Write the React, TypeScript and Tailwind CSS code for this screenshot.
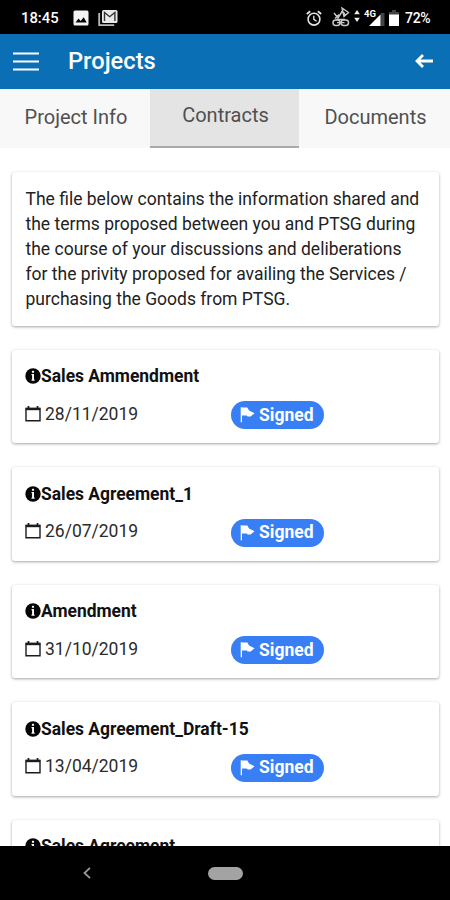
import { clsx } from "clsx";

const tabs = [
  { label: "Project Info", active: false },
  { label: "Contracts", active: true },
  { label: "Documents", active: false },
];

type Contract = { title: string; date?: string };

const contracts: Contract[] = [
  { title: "Sales Ammendment", date: "28/11/2019" },
  { title: "Sales Agreement_1", date: "26/07/2019" },
  { title: "Amendment", date: "31/10/2019" },
  { title: "Sales Agreement_Draft-15", date: "13/04/2019" },
  { title: "Sales Agreement" },
];

const intro = [
  "The file below contains the information shared and",
  "the terms proposed between you and PTSG during",
  "the course of your discussions and deliberations",
  "for the privity proposed for availing the Services /",
  "purchasing the Goods from PTSG.",
];

function InfoIcon() {
  return (
    <svg viewBox="0 0 16 16" className="-mt-px h-4 w-4 shrink-0">
      <circle cx="8" cy="8" r="7.7" fill="#050505" />
      <rect x="6.9" y="2.8" width="2.2" height="2" rx="0.6" fill="#fff" />
      <path d="M6.5 6h2.500v5.500h.6v1.200H6.500v-1.200h.6V7.200h-.6z" fill="#fff" />
    </svg>
  );
}

function CalendarIcon() {
  return (
    <svg viewBox="0 0 16 16" className="h-4 w-4 shrink-0" fill="none" stroke="#1c1c1c">
      <path d="M1 2.500h14v12.300H1z" strokeWidth="1.400" />
      <path d="M.8 3h14.400" strokeWidth="2.400" />
      <path d="M3.500 0v3M12.500 0v3" strokeWidth="1.700" />
    </svg>
  );
}

function FlagIcon() {
  return (
    <svg viewBox="0 0 15 16" className="-mt-px h-4 w-[15px] shrink-0" fill="#fff">
      <path d="M.7 .3h1.300v15H.7z" />
      <path d="M2 .6h5.400l1.600 2.800 5.600 2.800-4 3.300H7.600L6.800 8.600H2z" />
    </svg>
  );
}

function StatusBar() {
  return (
    <div className="flex h-[34px] shrink-0 items-center bg-black pl-[21px] pr-[19px] pt-0.5 text-white">
      <span className="w-[37px] text-[14.800px] font-medium">18:45</span>
      <svg viewBox="0 0 16 16" className="ml-[15px] h-4 w-4">
        <rect x=".5" y=".5" width="15" height="15" rx="1.5" fill="#f4f4f4" />
        <path d="M2.500 12.500l3-4 2.200 2.500 3-3.800 3 5.300z" fill="#050505" />
      </svg>
      <svg viewBox="0 0 20 18" className="ml-[9px] h-[18px] w-5" fill="none">
        <path d="M1.200 4v12.200h15" stroke="#bbb" strokeWidth="1.8" />
        <rect x="4" y="1" width="15.500" height="13" rx="1.5" fill="#e9e9e9" />
        <path d="M6.500 12V3.500l5.200 4.200 5.200-4.200V12" stroke="#333" strokeWidth="1.400" />
      </svg>

      <div className="ml-auto flex items-center">
        <svg viewBox="0 0 16 17" className="h-[17px] w-4" fill="none" stroke="#e4e4e4">
          <circle cx="8" cy="9.2" r="5.9" strokeWidth="1.6" />
          <path d="M.8 4l3.400-2.800M15.200 4l-3.400-2.800" strokeWidth="1.8" />
          <path d="M7.800 5.800v3.600l2.800 1.800" strokeWidth="1.3" />
        </svg>
        <svg viewBox="0 0 18 20" className="-mt-0.5 ml-[10px] h-5 w-[18px]" fill="none" stroke="#c9c9c9">
          <path d="M2 6l4 5 3.500-5.500M3 11.500l4-4M10 1l6.500 4.500-4.500 4zM9 4.500c2 .2 3.500 1.500 4 3.500" strokeWidth="1.400" />
          <rect x="1" y="13" width="7" height="5.500" rx="2.700" strokeWidth="1.5" />
          <rect x="9" y="13" width="7.500" height="5.500" rx="2.700" strokeWidth="1.5" />
          <path d="M4 12.500h9M5 15.700h7.500" strokeWidth="1.3" />
        </svg>
        <svg viewBox="0 0 6 12" className="-mt-1 ml-1 h-3 w-1.5" fill="#eee">
          <path d="M3 0l2.800 4.300H.2zM3 12L.2 7.700h5.600z" />
        </svg>
        <div className="relative ml-[9px] h-4 w-4">
          <svg viewBox="0 0 16 16" className="h-4 w-4">
            <path d="M11.500 3h4v13h-4z" fill="#444" />
            <path d="M0 16L11.500 4.500V16z" fill="#fff" />
          </svg>
          <span className="absolute -left-[5px] -top-[1px] text-[9.500px] font-bold leading-none">4G</span>
        </div>
        <svg viewBox="0 0 10 16" className="ml-1 h-4 w-2.5">
          <path d="M3 0h4v2h3v3H0V2h3z" fill="#444" />
          <path d="M0 4.500h10V16H0z" fill="#fff" />
        </svg>
        <span className="ml-[6px] w-[26px] whitespace-nowrap text-[14px] font-medium tracking-[-0.3px]">72%</span>
      </div>
    </div>
  );
}

function ContractCard({ title, date }: Contract) {
  return (
    <div className="h-[93.500px] shrink-0 rounded-[3px] bg-white px-[13px] pt-[15px] shadow-[0_1px_3px_rgba(0,0,0,0.36)]">
      <div className="flex h-6 items-center text-[17.450px] font-bold tracking-[-0.01px] text-[#111]">
        <InfoIcon />
        <span className="whitespace-nowrap">{title}</span>
      </div>
      {date && (
        <div className="mt-[12.500px] flex h-7 items-center">
          <div className="flex w-[206px] items-center gap-1 pb-[3px]">
            <CalendarIcon />
            <span className="text-[17.500px] leading-6 text-[#2b2b2b]">{date}</span>
          </div>
          <span className="flex h-7 w-[93px] items-center gap-1 rounded-full bg-[#387ef5] pl-[9px] pt-px text-[17.500px] font-bold leading-none text-white">
            <FlagIcon />
            Signed
          </span>
        </div>
      )}
    </div>
  );
}

export default function App() {
  return (
    <div className="flex h-[900px] w-[450px] flex-col overflow-hidden bg-white font-[Roboto,sans-serif]">
      <StatusBar />

      {/* App bar */}
      <header className="flex h-[55px] shrink-0 items-center bg-[#0b6fb6] pl-[13px] pr-[17px] text-white">
        <svg viewBox="0 0 26 19" className="h-[19px] w-[26px]" stroke="#fff" strokeWidth="2.200">
          <path d="M0 1.500h26M0 9.500h26M0 17.500h26" />
        </svg>
        <h1 className="ml-[29px] pt-px text-[23.700px] font-medium">Projects</h1>
        <svg viewBox="0 0 18 14" className="-mt-0.5 ml-auto h-3.5 w-[18px]" fill="none" stroke="#fff" strokeWidth="2.800">
          <path d="M8 1L2 7l6 6M2.500 7H18" />
        </svg>
      </header>

      {/* Tabs */}
      <nav className="grid h-[59px] shrink-0 grid-cols-[150px_149px_151px]">
        {tabs.map((tab) => (
          <button
            key={tab.label}
            className={clsx(
              "flex items-center justify-center whitespace-nowrap pl-0.5 text-[20px] text-[#505050]",
              tab.active ? "border-b-2 border-[#aaa] bg-[#e4e4e4] pb-[5px]" : "bg-[#f8f8f8] pb-[3px]"
            )}
          >
            {tab.label}
          </button>
        ))}
      </nav>

      <main className="flex min-h-0 flex-1 flex-col gap-6 overflow-hidden pl-3 pr-[11px] pt-6">
        <div className="h-[153.500px] shrink-0 rounded-[3px] bg-white px-[13.500px] pt-[15px] text-[17.500px] leading-[25px] text-[#222] shadow-[0_1px_3px_rgba(0,0,0,0.36)]">
          {intro.map((line) => (
            <p key={line} className="whitespace-nowrap">
              {line}
            </p>
          ))}
        </div>

        {contracts.map((contract) => (
          <ContractCard key={contract.title} {...contract} />
        ))}
      </main>

      {/* System navigation */}
      <div className="flex h-[54px] shrink-0 items-center bg-black pl-[83px]">
        <svg viewBox="0 0 8 12" className="h-3 w-2" fill="none" stroke="#999" strokeWidth="1.800">
          <path d="M7 .8L1.500 6 7 11.200" />
        </svg>
        <div className="ml-[117px] h-[13px] w-[35px] rounded-full bg-[#a3a3a3]" />
      </div>
    </div>
  );
}
